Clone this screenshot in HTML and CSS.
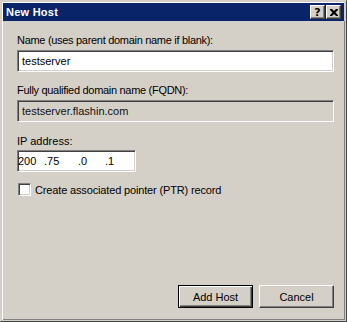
FILE: index.html
```html
<!DOCTYPE html>
<html>
<head>
<meta charset="utf-8">
<link rel="stylesheet" href="styles.css">
</head>
<body>
<div class="window">
  <div class="titlebar">
    <span class="title">New Host</span>
    <div class="tbtns">
      <span class="tbtn help">?</span>
      <span class="tbtn close">
        <svg width="8" height="7" viewBox="0 0 8 7"><path d="M0 0h2l2 2 2-2h2v1l-2.5 2.5L8 6v1H6L4 5 2 7H0V6l2.5-2.5L0 1z" fill="#000"/></svg>
      </span>
    </div>
  </div>
  <div class="content">
    <div class="label l1">Name (uses parent domain name if blank):</div>
    <div class="field f1">testserver</div>
    <div class="label l2">Fully qualified domain name (FQDN):</div>
    <div class="field ro">testserver.flashin.com</div>
    <div class="label l3">IP address:</div>
    <div class="field ip"><span class="o1">200</span><span class="o2">.75</span><span class="o3">.0</span><span>.1</span></div>
    <div class="check"><span class="box"></span><span class="clabel">Create associated pointer (PTR) record</span></div>
    <div class="spacer"></div>
    <div class="buttons">
      <div class="btn def"><span>Add Host</span></div>
      <div class="btn"><span>Cancel</span></div>
    </div>
  </div>
</div>
</body>
</html>
```
FILE: styles.css
```css
html, body { margin: 0; padding: 0; }
body { font-family: "Liberation Sans", Arial, sans-serif; font-size: 11px; color: #000; }
.window {
  width: 347px; height: 322px; box-sizing: border-box;
  background: #d4d0c8;
  border-top: 1px solid #d4d0c8; border-left: 1px solid #d4d0c8;
  border-right: 1px solid #404040; border-bottom: 1px solid #404040;
  display: flex; flex-direction: column;
}
.titlebar {
  margin: 2px 2px 0 2px;
  height: 18px;
  background: #0a246a;
  display: flex; align-items: center; justify-content: space-between;
  padding-left: 3px;
  box-shadow: 0 -1px 0 #fff, -1px 0 0 #fff, -1px -1px 0 #fff;
}
.title { color: #fff; font-weight: bold; font-size: 11px; letter-spacing: 0.25px; }
.tbtns { display: flex; gap: 1px; margin-right: 3px; }
.tbtn {
  width: 15px; height: 14px; box-sizing: border-box;
  background: #d4d0c8;
  border-top: 1px solid #fff; border-left: 1px solid #fff;
  border-right: 1px solid #404040; border-bottom: 1px solid #404040;
  box-shadow: inset -1px -1px 0 #808080;
  display: flex; align-items: center; justify-content: center;
  font-weight: bold; font-size: 11px; font-family: "DejaVu Sans", sans-serif; line-height: 1;
}
.content {
  flex: 1; display: flex; flex-direction: column;
  padding: 0 11px 12px 14px;
  border-left: 1px solid #fff; margin: 0 1px 1px 1px;
  box-shadow: inset -1px -1px 0 #808080;
}
.label { line-height: 13px; letter-spacing: -0.3px; }
.l1 { margin-top: 13px; }
.l2 { margin-top: 12px; }
.l3 { margin-top: 13px; letter-spacing: 0; }
.field {
  margin-top: 3px;
  height: 22px; box-sizing: border-box;
  background: #fff;
  border-top: 1px solid #808080; border-left: 1px solid #808080;
  border-right: 1px solid #fff; border-bottom: 1px solid #fff;
  box-shadow: inset 1px 1px 0 #404040, inset -1px -1px 0 #d4d0c8;
  padding: 0 4px; display: flex; align-items: center;
  font-size: 11px;
}
.ro { background: #d4d0c8; color: #111; }
.ip { width: 119px; padding-left: 0; margin-top: 2px; }
.ip span { display: inline-block; }
.o1 { width: 26px; }
.o2 { width: 34px; }
.o3 { width: 27px; }
.check { margin-top: 11px; display: flex; align-items: center; gap: 4px; font-size: 11px; padding-left: 1px; }
.clabel { letter-spacing: -0.15px; }
.box {
  width: 13px; height: 13px; box-sizing: border-box; background: #fff;
  border-top: 1px solid #808080; border-left: 1px solid #808080;
  border-right: 1px solid #fff; border-bottom: 1px solid #fff;
  box-shadow: inset 1px 1px 0 #404040, inset -1px -1px 0 #d4d0c8;
}
.spacer { flex: 1; }
.buttons { display: flex; justify-content: flex-end; gap: 6px; }
.btn {
  width: 75px; height: 23px; box-sizing: border-box;
  background: #d4d0c8;
  border-top: 1px solid #fff; border-left: 1px solid #fff;
  border-right: 1px solid #404040; border-bottom: 1px solid #404040;
  box-shadow: inset -1px -1px 0 #808080;
  display: flex; align-items: center; justify-content: center;
  font-size: 11px;
}
.btn.def { border: 1px solid #000; box-shadow: inset 1px 1px 0 #fff, inset -1px -1px 0 #404040, inset -2px -2px 0 #808080; }
```
